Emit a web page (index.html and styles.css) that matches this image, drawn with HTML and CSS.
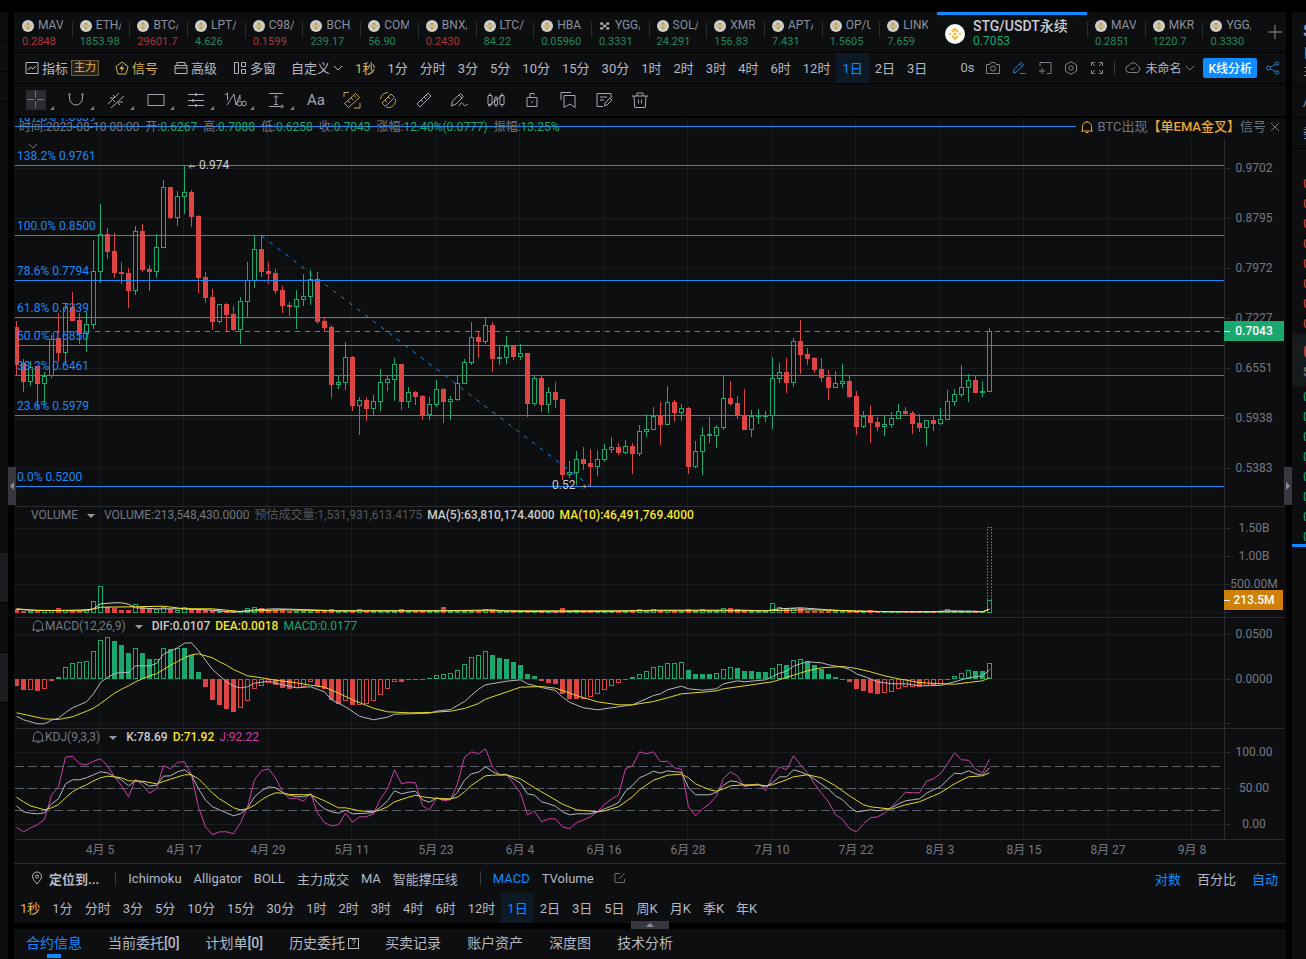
FILE: index.html
```html
<!DOCTYPE html>
<html lang="zh-CN">
<head>
  <meta charset="UTF-8">
  <meta name="viewport" content="width=device-width, initial-scale=1.0">
  <title>STG/USDT永续</title>
  <link rel="stylesheet" href="styles.css">
</head>
<body>
  <svg class="defs" aria-hidden="true">
    <symbol id="coin" viewBox="0 0 20 20">
      <circle cx="10" cy="10" r="10" fill="#fff"/>
      <path fill="#f3ba2f" d="M10 3.6l3.6 3.6-1.5 1.5L10 6.6 7.9 8.7 6.4 7.200zM3.600 10l1.500-1.500L6.600 10l-1.500 1.500zM16.400 10l-1.500-1.500-1.500 1.500 1.500 1.500zM10 8.200l1.800 1.800-1.800 1.800L8.200 10zM10 16.400l3.600-3.600-1.500-1.500-2.100 2.100-2.100-2.100-1.500 1.500z"/>
    </symbol>
    <symbol id="okx" viewBox="0 0 20 20">
      <path fill="#ddd" d="M2 4h5v4H2zM12 4h5v4h-5zM7 8h5v4H7zM2 12h5v4H2zM12 12h5v4h-5z"/>
    </symbol>
    <symbol id="bell" viewBox="0 0 14 14">
      <path d="M1 11h12M2.500 11V6.500a4.500 4.500 0 0 1 9 0V11M5.500 12.500h3M7 2V1"/>
    </symbol>
    <symbol id="down" viewBox="0 0 10 10"><path d="M1 3l4 4 4-4"/></symbol>
  </svg>

  <div class="app">
    <aside class="left">
      <div class="left-top"></div><div></div><div></div><div class="left-fill"></div>
      <div class="slot"></div><div class="left-gap"></div><div class="slot"></div>
    </aside>

    <main class="main">
      <nav class="tabs" id="tabs"></nav>

      <div class="toolbar">
        <button class="tool"><svg viewBox="0 0 14 14"><path d="M1 1.500h12v11H1zM3 9l2.500-3 2.500 2 3-3"/></svg>指标<b class="badge">主力</b></button>
        <button class="tool gold"><svg viewBox="0 0 14 14"><path d="M7 1l6 4.500-2 7.500H3L1 5.500z"/><path class="solid" d="M7.500 3.500L4.500 8h2.200L6 11l3.500-4.500H7z"/></svg>信号</button>
        <button class="tool"><svg viewBox="0 0 14 14"><path d="M1 4.500h12v8H1zM3 4.500v-3h8v3M1 7h12"/></svg>高级</button>
        <button class="tool"><svg viewBox="0 0 14 14"><path d="M1.500 1.500h4v11h-4zM8.500 1.500h4v4h-4zM8.500 8.500h4v4h-4z"/></svg>多窗</button>
        <button class="tool custom">自定义<svg class="chev"><use href="#down"/></svg></button>
        <div class="periods" id="topPeriods"></div>
        <div class="right-tools">
          <span class="secs">0s</span>
          <button aria-label="截图"><svg viewBox="0 0 14 14"><path d="M.5 3.500h3.500l1-2h4l1 2h3.500v9H.5z"/><circle cx="7" cy="7.500" r="2.500"/></svg></button>
          <button class="blue" aria-label="画线"><svg viewBox="0 0 14 14"><path d="M1.500 12l.5-3.500 7-7 2.500 2.500-7 7zM7.500 3l2.500 2.500M8 12.500h5.500"/></svg></button>
          <button aria-label="添加窗口"><svg viewBox="0 0 14 14"><path d="M2 5V1.500h11v11H9M1 10h6M4 7v6"/></svg></button>
          <button aria-label="设置"><svg viewBox="0 0 14 14"><path d="M7 .7l5.500 3.100v6.400L7 13.300l-5.500-3.100V3.800z"/><circle cx="7" cy="7" r="2.200"/></svg></button>
          <button aria-label="全屏"><svg viewBox="0 0 14 14"><path d="M1.500 5V1.500H5M9 1.500h3.500V5M12.500 9v3.500H9M5 12.500H1.500V9M2 2l3 3M12 2L9 5M12 12L9 9M2 12l3-3"/></svg></button>
          <i class="bar"></i>
          <button class="saved"><svg viewBox="0 0 16 14"><path d="M4.500 11.500a3.500 3.500 0 0 1-.5-7 4.500 4.500 0 0 1 8.300 0 3.600 3.600 0 0 1-.3 7zM5.500 7l2 2 3-3"/></svg><span>未命名</span><svg class="chev"><use href="#down"/></svg></button>
          <button class="primary">K线分析</button>
          <button class="blue share" aria-label="分享"><svg viewBox="0 0 14 14"><circle cx="2.500" cy="7" r="2"/><circle cx="11" cy="2.500" r="1.700"/><circle cx="11" cy="11.500" r="1.700"/><path d="M4.500 6l5-2.700M4.500 8l5 2.700"/></svg></button>
        </div>
      </div>

      <div class="draw">
        <button class="wide on" aria-label="十字线"><svg viewBox="0 0 20 20"><path d="M1 9.500h7M11 9.500h7M9.500 1v7M9.500 11v7"/></svg></button>
        <button class="wide" aria-label="曲线"><svg viewBox="0 0 20 20"><path d="M3.500 5v3a6.500 7 0 0 0 13 0V5"/><circle cx="3.500" cy="4.500" r=".8"/><circle cx="16.500" cy="4.500" r=".8"/></svg></button>
        <button class="wide" aria-label="趋势线"><svg viewBox="0 0 20 20"><path d="M2 14L13 3M5 18L18 6M4 8h4M12 12h5M7 5l2 2M12 13l2 2M7 10l2 2"/></svg></button>
        <button class="wide" aria-label="矩形"><svg viewBox="0 0 20 20"><path d="M2 4.500h16v11H2z"/></svg></button>
        <button class="wide" aria-label="通道"><svg viewBox="0 0 20 20"><path d="M2 4.500h16M2 10.500h16M2 15.500h16"/><circle cx="10" cy="4.500" r="1"/><circle cx="7" cy="10.500" r="1"/><circle cx="10" cy="15.500" r="1"/></svg></button>
        <button class="wide" aria-label="波浪"><svg viewBox="0 0 20 20"><path d="M-1 5L1.500 3v7M1 15L8 4l2 11 4-10v5"/><circle cx="13.500" cy="13.500" r="2.300"/><circle cx="18" cy="13.500" r="2.300"/></svg></button>
        <button class="wide" aria-label="测距"><svg viewBox="0 0 20 20"><path d="M3 3.500h14M3 16.500h12M10 6v9M8 7.500L10 5.500l2 2M8 14.500h4"/><circle cx="16" cy="16.500" r="1.200"/></svg></button>
        <button class="aa">Aa</button>
        <button class="gold" aria-label="区间统计"><svg viewBox="0 0 20 20"><path d="M2 7V2.500h5M18 13v5h-6M2.500 13.500l11-10 4 4-11 10zM6 11l2 2M9 8l2 2M12 5.500l2 2"/></svg></button>
        <button class="gold" aria-label="圆形统计"><svg viewBox="0 0 20 20"><path d="M2.500 9A7.500 7.500 0 0 1 10 2.500M17.500 9a7.500 7.500 0 0 1-9 8.500M4 13l9-9 3.500 3.500-9 9zM7 10l2 2M10 7l2 2"/></svg></button>
        <button aria-label="尺子"><svg viewBox="0 0 20 20"><path d="M3 14L14 3l3 3L6 17zM7 10l2 2M10 7l2 2M12 5l1.500 1.500"/></svg></button>
        <button aria-label="画笔"><svg viewBox="0 0 20 20"><path d="M1.500 16l1-5 8-7.500 3 3L6 14zM9 5l3 3M9 16c2-4 3-4 4-2s2 2 5 0"/></svg></button>
        <button aria-label="K线样式"><svg viewBox="0 0 20 20"><path d="M2 5.500h4v9H2zM8.500 8h3v7h-3zM14 5.500h4v9h-4zM4 3v2M4 15v2M10 6v2M10 15v2M16 3v2M16 15v2M2 16L17 5"/></svg></button>
        <button aria-label="锁定"><svg viewBox="0 0 20 20"><path d="M5 7.500h10v9H5zM8 7V3.500h4V5M10 11v2"/></svg></button>
        <button aria-label="收藏"><svg viewBox="0 0 20 20"><path d="M6 5.500h11v12l-5-3.500-6 3.500zM3 10V2.500h10"/></svg></button>
        <button aria-label="笔记"><svg viewBox="0 0 20 20"><path d="M17 8V3.500H3v13h6M6 7h7M6 10h4M10.500 16l.5-3 5-5 2 2-5 5z"/></svg></button>
        <button aria-label="删除"><svg viewBox="0 0 20 20"><path d="M2 6h16M7 6V3h6v3M4 6l.7 11.500h10.600L16 6M8.500 9.500v4M11.500 9.500v4"/></svg></button>
      </div>

      <section class="chart" id="chart">
        <svg class="plot" id="plot" role="img" aria-label="STG/USDT 日线"></svg>
        <div class="pane">
          <p class="legend ohlc">
            <span>时间:2023-08-10 08:00</span><span>开:<em>0.6267</em></span><span>高:<em>0.7088</em></span><span>低:<em>0.6258</em></span><span>收:<em>0.7043</em></span><span>涨幅:<em>12.40%(0.0777)</em></span><span>振幅:<em>13.25%</em></span>
          </p>
          <p class="alert"><svg><use href="#bell"/></svg><span>BTC出现<b>【单EMA金叉】</b>信号</span><button aria-label="关闭"><svg viewBox="0 0 10 10"><path d="M1 1l8 8M9 1L1 9"/></svg></button></p>
        </div>
        <div class="pane">
          <p class="legend"><span class="name">VOLUME</span><i class="caret"></i><span>VOLUME:213,548,430.0000</span><span class="dim">预估成交量:1,531,931,613.4175</span><b>MA(5):63,810,174.4000</b><b class="yellow">MA(10):46,491,769.4000</b></p>
        </div>
        <div class="pane">
          <p class="legend"><span class="name"><svg><use href="#bell"/></svg>MACD(12,26,9)</span><i class="caret"></i><b>DIF:0.0107</b><b class="yellow">DEA:0.0018</b><em>MACD:0.0177</em></p>
        </div>
        <div class="pane">
          <p class="legend"><span class="name"><svg><use href="#bell"/></svg>KDJ(9,3,3)</span><i class="caret"></i><b>K:78.69</b><b class="yellow">D:71.92</b><span class="pink">J:92.22</span></p>
        </div>
      </section>

      <div class="indicators">
        <svg class="pin" viewBox="0 0 12 14"><path d="M6 13C3 9.500 1.500 7.500 1.500 5.500a4.500 4.500 0 0 1 9 0C10.500 7.500 9 9.500 6 13z"/><circle cx="6" cy="5.500" r="1.500"/></svg>
        <button class="locate">定位到...</button>
        <i class="bar"></i>
        <button>Ichimoku</button><button>Alligator</button><button>BOLL</button><button>主力成交</button><button>MA</button><button>智能撑压线</button>
        <i class="bar second"></i>
        <button class="active">MACD</button><button>TVolume</button>
        <button class="edit" aria-label="编辑"><svg viewBox="0 0 12 12"><path d="M6 1.500H1v9h9.500V7M5 7l5.500-5.500"/></svg></button>
        <div class="scale"><button class="active">对数</button><button>百分比</button><button class="active">自动</button></div>
      </div>
      <div class="periods lower" id="lowPeriods"></div>

      <nav class="bottom">
        <a href="#" class="active">合约信息</a><a href="#">当前委托<b>[0]</b></a><a href="#">计划单<b>[0]</b></a><a href="#">历史委托<i class="help">?</i></a><a href="#">买卖记录</a><a href="#">账户资产</a><a href="#">深度图</a><a href="#">技术分析</a>
      </nav>
      <button class="handle h-left" aria-label="展开左侧"></button>
      <button class="handle h-right" aria-label="收起右侧"></button>
      <button class="handle h-bottom" aria-label="展开底部"></button>
    </main>

    <aside class="right">
      <div class="r-head"><b>S</b><span>日</span><span>主</span></div>
      <div class="r-row">/</div>
      <div class="r-row">委</div>
      <div class="book" id="book"></div>
    </aside>
  </div>
  <script src="app.js"></script>
</body>
</html>
```
FILE: styles.css
```css
* {
  box-sizing: border-box;
}
body {
  margin: 0;
  background: #000;
  color: #b4b9c4;
  font-family: Roboto, "Noto Sans CJK SC", sans-serif;
  font-size: 13px;
  overflow-x: hidden;
}
button {
  background: none;
  border: 0;
  padding: 0;
  color: inherit;
  font: inherit;
  white-space: nowrap;
  cursor: pointer;
}
p {
  margin: 0;
}
em, i {
  font-style: normal;
}
svg {
  fill: none;
  stroke: currentColor;
}
.defs {
  position: absolute;
  width: 0;
  height: 0;
}
.app {
  display: grid;
  grid-template-columns: 8px minmax(0, 1fr) 14px;
  gap: 6px;
  padding-top: 12px;
  min-height: 100vh;
}

/* side strips */
.left {
  display: flex;
  flex-direction: column;
  background: #0d0e10;
}
.left div {
  height: 30px;
  border-bottom: 1px solid #000;
}
.left .left-fill {
  height: 451px;
  border: 0;
}
.left .slot {
  height: 50px;
  background: #1c1d21;
}
.left .left-gap {
  height: 50px;
}
.right {
  background: #0d0e10;
  overflow: hidden;
}
.r-head, .r-row {
  padding-left: 11px;
  border-bottom: 1px solid #000;
}
.r-head {
  height: 75px;
  padding-top: 6px;
  color: #7f9ac0;
}
.r-head b {
  display: block;
  font-size: 18px;
  line-height: 26px;
}
.r-head span {
  display: block;
  line-height: 18px;
}
.r-row {
  height: 31px;
  line-height: 30px;
  color: #7f9ac0;
}
.book {
  padding-top: 25px;
  border-bottom: 3px solid #108bff;
}
.book div {
  height: 20px;
  padding-left: 11px;
  line-height: 20px;
}
.book div:last-child {
  height: 17px;
}
.book .sell {
  color: #dd4545;
}
.book .buy {
  color: #1aa86e;
}
.book .last {
  height: 52px;
  padding-top: 8px;
  margin-bottom: 1px;
  background: #181b1c;
  font-size: 18px;
}
.book small {
  display: block;
  color: #888;
  font-size: 12px;
}

.main {
  position: relative;
  min-width: 0;
  display: flex;
  flex-direction: column;
}
.toolbar, .draw, .tabs, .indicators, .lower {
  display: flex;
  align-items: center;
  background: #0d0e10;
}

/* symbol tabs */
.tabs {
  height: 41px;
  border-bottom: 1px solid #000;
}
.tab {
  position: relative;
  flex: 1 1 0;
  min-width: 0;
  height: 40px;
  padding: 2px 0 0 8px;
  text-align: left;
  font-size: 11px;
  line-height: 15px;
  color: #228a5e;
}
.tab.fall {
  color: #ac3838;
}
.tab + .tab:not(.current)::before {
  content: "";
  position: absolute;
  left: 0;
  top: 10px;
  width: 1px;
  height: 16px;
  background: #2c2d31;
}
.tab .pair {
  display: flex;
  align-items: center;
  gap: 4px;
  height: 17px;
  color: #8b909a;
  font-size: 12px;
}
.tab .pair svg {
  flex: none;
  width: 12px;
  height: 12px;
  stroke: none;
  opacity: .8;
}
.tab .pair span {
  width: 25px;
  overflow: hidden;
}
.tab.current {
  flex: 0 0 150px;
  display: flex;
  align-items: center;
  gap: 8px;
  padding: 0 0 0 8px;
  border-top: 3px solid #108bff;
  color: #1aa86e;
  font-size: 12px;
}
.tab.current svg {
  width: 20px;
  height: 20px;
  stroke: none;
}
.tab.current strong {
  display: block;
  color: #c9cdd6;
  font-size: 14px;
  font-weight: 500;
}
.plus {
  flex: 0 0 26px;
  height: 40px;
}
.plus svg {
  width: 14px;
  height: 14px;
  margin: 2px 0 0 4px;
  color: #8b909a;
}

/* main toolbar */
.toolbar {
  height: 31px;
  padding-left: 11px;
  padding-bottom: 1px;
  border-bottom: 1px solid #000;
}
.toolbar svg {
  width: 14px;
  height: 14px;
  flex: none;
}
.toolbar .chev {
  width: 10px;
  height: 10px;
}
.tool {
  display: flex;
  align-items: center;
  gap: 3px;
  margin-right: 16px;
}
.tool.custom {
  margin: 0 6px 0 -1px;
}
.badge {
  height: 16px;
  padding: 0 2px;
  border: 1px solid #6f5a33;
  background: #2b2519;
  color: #e0b252;
  font-size: 11px;
  font-weight: 400;
  line-height: 13px;
}
.gold {
  color: #dcb255;
}
.gold .solid {
  fill: currentColor;
  stroke: none;
}
.periods {
  display: flex;
}
.periods button {
  height: 30px;
  padding: 0 6px 1px;
}
.periods button.sec {
  color: #dcb255;
}
.periods button.on {
  background: #0d1a25;
  color: #108bff;
}
.right-tools {
  display: flex;
  align-items: center;
  gap: 12px;
  margin-left: auto;
  padding-right: 6px;
  color: #7b808b;
}
.right-tools button {
  display: flex;
  align-items: center;
}
.right-tools .blue {
  color: #2a7fd0;
}
.right-tools .share {
  margin-left: -3px;
}
.secs {
  color: #a9aeb9;
}
.bar {
  width: 1px;
  height: 14px;
  background: #3a3b40;
}
.right-tools .bar {
  margin: 0 -2px;
}
.right-tools .saved {
  gap: 4px;
  margin-right: -4px;
  font-size: 12px;
}
.saved svg:first-child {
  width: 16px;
}
.saved span {
  color: #b4b9c4;
}
.right-tools .primary {
  height: 20px;
  padding: 0 5px;
  border-radius: 2px;
  background: #108bff;
  color: #fff;
  font-size: 12px;
  font-weight: 500;
}

/* drawing tools */
.draw {
  height: 34px;
  padding-left: 2px;
  border-bottom: 2px solid #000;
  color: #a2a7b3;
}
.draw button {
  display: flex;
  justify-content: center;
  align-items: center;
  width: 36px;
  height: 32px;
}
.draw .gold {
  color: #c9a44f;
}
.draw svg {
  width: 20px;
  height: 20px;
  overflow: visible;
}
.draw .wide {
  position: relative;
  width: 40px;
}
.draw .wide::after {
  content: "";
  position: absolute;
  right: 2px;
  bottom: 6px;
  border: 2px solid;
  border-color: transparent #777b86 #777b86 transparent;
}
.draw .on svg {
  background: #2b2c31;
  color: #108bff;
}
.draw .aa {
  margin-left: 2px;
  font-size: 15px;
}

/* chart */
.chart {
  position: relative;
  display: grid;
  grid-template-rows: 388px 111px 111px 111px 24px;
  height: 745px;
  background: #0d0e10;
}
.plot {
  position: absolute;
  inset: 0;
  width: 100%;
  height: 100%;
  font-size: 12px;
}
.plot text {
  stroke: none;
  fill: #747884;
}
.plot .fib {
  fill: #1e88f5;
}
.plot .note {
  fill: #ccc;
}
.plot .tag {
  fill: #fff;
  font-weight: 500;
}
.pane {
  position: relative;
  display: flex;
  justify-content: space-between;
  align-items: flex-start;
}
.legend {
  display: flex;
  align-items: center;
  gap: 5px;
  height: 18px;
  padding-left: 17px;
  font-size: 12px;
  line-height: 16px;
  color: #747884;
  white-space: nowrap;
}
.legend.ohlc {
  gap: 6px;
  padding-left: 5px;
}
.legend em {
  color: #1aa86e;
}
.legend b {
  color: #ccc;
  font-weight: 500;
}
.legend .yellow {
  color: #f5e62c;
}
.legend .pink {
  color: #cf3fa6;
}
.legend .dim {
  color: #54575f;
}
.legend .name {
  display: flex;
  align-items: center;
}
.legend .name svg {
  width: 14px;
  height: 14px;
}
.caret {
  margin: 2px 4px 0 4px;
  border: 4px solid transparent;
  border-top-color: #9498a4;
  border-bottom: 0;
}
.alert {
  display: flex;
  align-items: center;
  gap: 4px;
  height: 20px;
  padding: 0 6px 2px 4px;
  background: #0d0e10;
  color: #70747f;
  line-height: 18px;
}
.alert svg {
  width: 14px;
  height: 14px;
  color: #e9a63b;
}
.alert b {
  color: #e9a63b;
  font-weight: 500;
}
.alert button {
  display: flex;
}
.alert button svg {
  width: 10px;
  height: 10px;
  color: #70747f;
}

/* below the chart */
.indicators {
  height: 30px;
  gap: 12px;
  padding: 0 8px 1px 17px;
  border-top: 1px solid #2b2c31;
}
.indicators svg {
  width: 12px;
  height: 14px;
}
.locate {
  margin: 0 4px 0 -6px;
  font-weight: 700;
}
.indicators .second {
  margin-left: 10px;
}
.active {
  color: #108bff;
}
.edit {
  display: flex;
  margin-left: 8px;
  color: #666a74;
}
.scale {
  display: flex;
  gap: 16px;
  margin-left: auto;
}
.bottom {
  flex: 1;
  display: flex;
  gap: 26px;
  min-height: 30px;
  margin-top: 6px;
  padding-left: 12px;
  background: #0d0e10;
  font-size: 14px;
  line-height: 29px;
}
.bottom a {
  position: relative;
  color: #b4b9c4;
  text-decoration: none;
  white-space: nowrap;
}
.bottom a.active {
  color: #108bff;
}
.bottom a.active::after {
  content: "";
  position: absolute;
  left: 50%;
  top: 25px;
  width: 14px;
  height: 4px;
  margin-left: -7px;
  background: #108bff;
}
.bottom b {
  font-weight: 500;
}
.help {
  display: inline-block;
  width: 11px;
  height: 11px;
  margin-left: 3px;
  border: 1px solid;
  font-size: 9px;
  line-height: 9px;
  text-align: center;
  vertical-align: 2px;
}
.handle {
  position: absolute;
  display: flex;
  align-items: center;
  justify-content: center;
  width: 8px;
  height: 38px;
  top: 455px;
  background: #36373f;
}
.handle::after {
  content: "";
  border: 4px solid transparent;
}
.h-left {
  left: -6px;
}
.h-left::after {
  border-right-color: #8a8d99;
  border-left: 0;
}
.h-right {
  right: -6px;
}
.h-right::after {
  border-left-color: #8a8d99;
  border-right: 0;
}
.h-bottom {
  top: 909px;
  left: 50%;
  width: 38px;
  height: 8px;
  margin-left: -19px;
}
.h-bottom::after {
  border-bottom-color: #8a8d99;
  border-top: 0;
}
```
FILE: app.js
```js
// ---- symbol tabs ----
const tabs = [
  ["MAV", "0.2848", 0], ["ETH/", "1853.98", 1], ["BTC/", "29601.7", 0], ["LPT/", "4.626", 1],
  ["C98/", "0.1599", 0], ["BCH/", "239.17", 1], ["COM", "56.90", 1], ["BNX/", "0.2430", 0],
  ["LTC/", "84.22", 1], ["HBA", "0.05960", 1], ["YGG/", "0.3331", 1, "okx"], ["SOL/", "24.291", 1],
  ["XMR", "156.83", 1], ["APT/", "7.431", 1], ["OP/U", "1.5605", 1], ["LINK", "7.659", 1],
  "current",
  ["MAV", "0.2851", 1], ["MKR", "1220.7", 1], ["YGG/", "0.3330", 1]
];
document.getElementById("tabs").innerHTML = tabs.map(t => t === "current"
  ? `<button class="tab current"><svg><use href="#coin"/></svg><span><strong>STG/USDT永续</strong>0.7053</span></button>`
  : `<button class="tab${t[2] ? "" : " fall"}"><span class="pair"><svg><use href="#${t[3] || "coin"}"/></svg><span>${t[0]}</span></span>${t[1]}</button>`
).join("") + `<button class="plus" aria-label="添加"><svg viewBox="0 0 14 14"><path d="M7 0v14M0 7h14"/></svg></button>`;

// ---- period buttons ----
const periods = "1秒 1分 分时 3分 5分 10分 15分 30分 1时 2时 3时 4时 6时 12时 1日 2日 3日".split(" ");
const periodButton = p => `<button class="${p === "1秒" ? "sec" : p === "1日" ? "on" : ""}">${p}</button>`;
document.getElementById("topPeriods").innerHTML = periods.map(periodButton).join("");
document.getElementById("lowPeriods").innerHTML = periods.concat("5日", "周K", "月K", "季K", "年K").map(periodButton).join("");

// ---- order book strip ----
document.getElementById("book").innerHTML =
  '<div class="sell">0</div>'.repeat(8) + '<div class="last sell">0<small>$</small></div>' + '<div class="buy">0</div>'.repeat(8);

// ---- chart data ----
// candles: direction, high, body top, body bottom, low (plot rows)
const candles = `r321,327,365,375 r359,363,382,392 g361,367,382,386 r366,366,384,408 g372,376,384,405 g335,339,376,378 r313,338,353,362
g303,307,353,365 r292,307,321,321 r313,320,334,344 g312,324,334,352 g240,271,325,329 g204,234,272,283 r228,234,252,259 r233,251,273,278
r262,272,274,284 r268,273,291,308 g226,231,291,295 r224,231,270,272 r265,269,272,291 g234,247,272,278 g180,187,248,248 r187,187,218,219
g191,196,218,226 g165,192,197,214 r190,192,217,227 r215,216,278,293 r272,277,298,303 r289,297,322,330 g304,304,322,323 r303,304,315,331
r306,314,330,331 g297,301,330,344 g262,280,302,318 g236,249,281,288 r236,249,272,277 r262,271,274,284 r269,273,291,294 r286,290,306,313
r302,305,307,316 g290,299,307,329 g274,296,300,306 g270,279,297,305 r272,279,322,324 r318,321,328,332 r325,327,385,398 g376,382,385,389
g342,357,383,390 r356,357,406,411 g397,400,406,435 r397,400,409,421 g395,401,409,416 g369,382,402,411 g376,379,383,391 g358,364,380,401
r364,364,402,410 g387,392,402,408 r391,392,397,405 r395,396,415,420 g397,404,415,420 g380,389,405,407 r388,389,402,423 g396,399,402,420
g376,383,400,401 g359,362,384,384 g322,337,363,365 r332,337,342,358 g318,325,342,344 r322,325,359,372 g346,357,359,365 g336,346,358,364
r346,346,357,360 g344,353,357,360 r353,353,404,417 g376,378,404,406 r376,378,405,412 g387,392,405,413 r382,392,400,408 r399,399,475,480
g461,472,475,478 g451,459,473,485 r447,459,464,470 r449,463,467,486 g450,459,467,476 g444,449,460,462 g437,447,450,453 r443,447,453,455
g440,446,453,454 r443,446,454,474 g425,431,454,456 g414,429,432,437 g407,416,430,430 r402,416,425,445 g386,402,425,425 r400,402,413,422
g404,408,413,421 r407,408,467,474 g441,451,467,468 g427,435,452,475 g417,434,436,443 g425,427,436,448 g376,398,428,430 r381,398,404,406
r396,403,416,419 r389,416,430,430 g410,416,430,437 g409,415,417,424 g411,415,417,422 g357,378,416,429 g363,372,379,383 r358,372,383,393
g338,341,383,387 r320,341,355,374 r348,354,359,365 r357,358,370,373 r358,369,378,382 r370,377,388,400 g371,383,388,388 g364,381,384,388
r376,381,397,398 r391,396,427,435 g411,416,427,428 r405,416,423,443 r417,422,427,431 g416,424,427,436 g412,418,425,428 g404,411,419,419
r407,411,414,416 r411,413,424,434 r414,423,428,432 g420,420,428,446 r416,420,424,431 g408,419,424,425 g390,401,420,420 g389,394,402,406
g365,387,395,397 g374,380,388,402 r376,380,393,393 g381,391,393,397 g328,331,392,392`
  .split(/\s+/).map(c => [c[0] === "g", ...c.slice(1).split(",").map(Number)]);

// volume bars taller than the usual two rows
const volume = { 0: 4, 4: 3, 5: 3, 6: 5, 7: 3, 10: 4, 11: 12, 12: 27, 13: 6, 14: 5, 15: 3, 16: 3, 17: 9, 18: 6, 19: 4, 20: 4, 21: 6, 22: 4, 23: 3,
  24: 6, 25: 4, 26: 4, 27: 3, 28: 3, 33: 5, 34: 6, 35: 5, 36: 3, 37: 3, 38: 3, 45: 4, 49: 4, 55: 4, 61: 6, 67: 4, 68: 3, 78: 5, 80: 3, 89: 4,
  91: 4, 93: 3, 96: 4, 98: 4, 101: 5, 102: 5, 103: 4, 104: 3, 108: 10, 109: 6, 110: 4, 111: 5, 112: 5, 122: 3, 133: 4, 139: 13 };

const macd = [-7, -11.2, -11, -12, -10, -2, 1.9, 12, 16, 17, 18, 28, 39, 42, 38, 34, 26, 31, 26, 20, 20.1, 31, 30, 31.2, 31, 24, 7, -8, -21, -26,
  -30, -33, -29, -22, -10, -7, -4, -6, -9, -10, -9, -8, -3, -7, -10, -21, -25, -22, -26, -25.900, -25, -22, -16, -10, -3, -3.100, -1, -.9, -1, 1, 4,
  5, 6, 9, 15, 22, 24, 28, 24, 21, 20, 17, 14, 5, 3, -2, -4, -5, -15, -20, -20.100, -20, -18, -15, -11, -7, -4, -1, 2, 5, 8, 12, 13, 16, 16.100, 17,
  9, 5, 4.900, 4.800, 6, 10, 12, 11, 8, 7.900, 7, 6.900, 11, 15, 14, 19, 20, 18, 14, 10, 5, 2, -1, -3, -10, -12, -14, -15, -14, -13, -10, -8, -7.900,
  -8, -7, -6, -5, -1, 3, 6, 9, 8, 7.900, 16];

// indicator lines: "index:value", values at three steps per row
const lines = [
  ["#d0d0d0", "0:326 2:329 6:330 10:328 11:325 12:310 14:307 15:307 16:311 17:322 20:325 24:325 28:329 31:335 34:328 37:325 42:328 46:331 60:331 66:329 68:328 70:332 77:334 86:332 91:329 104:329 107:331 109:325 112:322 116:328 120:333 131:334 133:331 137:332 138:334 139:326"],
  ["#f5e62c", "0:325 3:330 10:331 12:320 17:319 21:317 24:325 28:325 32:333 38:328 45:331 107:331 113:328 120:331 125:334 138:334 139:326"],
  ["#b5b7bb", "0:647 1:658 3:670 4:670 5:659 6:653 7:636 8:622 10:604 11:580 12:546 13:530 14:520 15:515 16:517 17:496 19:496 20:489 21:461 23:442 24:428 25:427 26:451 28:507 30:544 31:557 32:562 33:559 34:548 36:542 38:553 40:562 42:559 44:574 45:598 47:619 49:647 51:658 53:650 54:641 59:638 60:632 62:627 64:603 66:566 67:553 70:542 72:538 73:550 75:561 77:570 78:590 79:605 81:622 83:628 86:619 88:613 91:585 92:580 93:568 95:557 96:565 98:569 100:565 101:550 103:541 104:544 107:538 109:518 110:512 111:497 112:490 113:484 115:487 116:493 118:500 119:507 120:520 122:535 123:544 125:550 127:550 129:556 132:555 134:544 136:532 138:526 139:508"],
  ["#e2d52e", "0:637 2:646 4:655 6:657 7:653 8:649 10:632 11:623 12:609 14:578 15:566 16:556 17:544 19:526 20:520 22:494 23:483 24:472 25:463 26:460 28:472 29:484 30:494 31:507 33:526 35:532 37:539 40:547 42:554 44:560 46:578 48:598 51:623 53:634 56:637 59:636 62:632 64:624 66:609 67:596 72:560 75:558 77:563 78:570 80:585 83:604 86:613 88:613 91:603 93:592 95:580 98:575 100:571 101:565 104:556 108:544 111:524 113:511 115:502 118:498 120:504 122:514 124:526 126:535 129:546 132:550 134:551 136:546 138:541 139:532"],
  ["#cf3fa6", "0:981 1:994 2:982 3:973 4:956 5:884 6:859 7:770 8:767 9:790 10:793 11:782 12:775 13:796 14:829 15:856 16:889 17:836 18:854 19:878 20:865 21:796 22:805 23:785 24:784 25:823 26:920 27:979 28:1003 29:994 30:994 31:1000 32:967 33:920 34:838 35:811 36:805 37:832 38:874 39:895 40:893 41:902 42:878 43:937 44:967 45:976 46:973 47:938 48:965 49:949 50:949 51:940 52:895 53:865 54:808 55:850 56:845 57:847 58:916 59:929 60:892 61:901 62:898 63:850 64:770 65:754 66:760 67:745 68:799 69:822 70:821 71:850 72:878 73:943 74:932 75:964 76:955 77:955 78:979 79:985 80:967 81:958 82:949 83:934 84:911 85:896 86:883 87:805 88:796 89:754 90:760 91:754 92:784 93:782 94:802 95:806 96:919 97:946 98:925 99:910 100:886 101:833 102:814 103:827 104:859 105:853 106:850 107:871 108:827 109:799 110:808 111:766 112:793 113:817 114:850 115:878 116:904 117:943 118:956 119:985 120:994 121:970 122:952 123:949 124:938 125:919 126:898 127:875 128:877 129:877 130:842 131:835 132:820 133:790 134:757 135:778 136:779 137:805 138:818 139:776"],
  ["#b5b7bb", "0:916 1:934 2:938 3:940 4:937 5:910 6:895 7:850 8:838 9:838 10:832 11:823 12:814 13:817 14:829 15:838 16:856 17:841 18:845 19:857 20:854 21:827 22:826 23:814 24:808 25:823 26:865 27:899 28:919 29:928 30:937 31:946 32:940 33:923 34:889 35:871 36:859 37:862 38:876 39:885 40:888 41:889 42:881 43:907 44:925 45:934 46:938 47:929 48:940 50:938 51:936 52:920 53:901 54:871 55:880 56:875 57:872 58:898 59:905 60:892 61:897 62:896 63:875 64:839 65:820 66:815 67:799 68:813 69:823 70:823 71:835 72:848 73:880 74:884 75:904 76:910 77:917 78:934 79:943 80:940 82:940 83:934 84:925 85:917 86:906 87:872 88:855 89:832 90:823 91:812 92:818 93:811 94:814 95:815 96:862 97:883 99:883 100:875 101:854 102:841 103:844 104:856 106:853 107:859 108:847 109:829 110:829 111:808 112:814 113:823 114:836 115:851 116:866 117:886 118:898 119:919 120:934 121:931 122:928 123:931 124:928 125:922 126:910 127:901 128:898 129:895 130:878 131:868 132:859 133:838 134:818 135:820 136:811 137:820 138:824 139:802"],
  ["#e2d52e", "0:890 1:904 2:916 3:922 4:928 5:922 6:912 7:892 8:874 9:862 10:853 11:841 12:832 13:827 14:829 15:832 16:841 18:842 20:850 22:836 24:823 25:823 26:835 27:856 28:878 29:895 30:908 31:922 32:928 33:925 34:914 35:898 36:886 37:877 38:878 39:882 42:883 44:901 46:922 47:922 49:931 51:934 52:928 53:919 54:904 56:890 57:884 58:889 60:894 62:895 63:890 64:874 65:854 66:840 67:826 68:824 70:823 72:835 74:862 76:886 78:911 80:928 83:934 84:931 86:919 88:889 89:868 91:839 92:832 93:824 95:821 96:832 97:850 98:859 99:868 100:872 101:865 102:856 104:853 106:853 107:856 108:853 110:838 111:829 113:823 115:832 117:856 119:886 121:913 122:919 125:926 127:913 129:904 131:886 132:877 134:850 136:829 138:826 139:817"]
];

const fibs = [[126, "161.8% 1.0539"], [165, "138.2% 0.9761"], [235, "100.0% 0.8500"], [280, "78.6% 0.7794"], [317, "61.8% 0.7239"],
  [345, "50.0% 0.6850"], [375, "38.2% 0.6461"], [415, "23.6% 0.5979"], [486, "0.0% 0.5200"]];
const ticks = [[168, "0.9702"], [218, "0.8795"], [268, "0.7972"], [318, "0.7227"], [368, "0.6551"], [418, "0.5938"], [468, "0.5383"],
  [528, "1.50B"], [556, "1.00B"], [584, "500.00M"], [612, ""], [634, "0.0500"], [679, "0.0000"], [723, ""],
  [752, "100.00"], [788, "50.00"], [824, "0.00"]];
const dates = ["4月 5", "4月 17", "4月 29", "5月 11", "5月 23", "6月 4", "6月 16", "6月 28", "7月 10", "7月 22", "8月 3", "8月 15", "8月 27", "9月 8"];

const UP = "#1aa86e", DOWN = "#dd4545", BG = "#0d0e10";
const LEFT = 14, TOP = 118;

const rect = (x, y, w, h, fill) => `<rect x="${x}" y="${y}" width="${w}" height="${h}" fill="${fill}" stroke="none"/>`;
const bar = (x, y, h, color, hollow) => hollow && h > 2
  ? `<rect x="${x - 1.5}" y="${y + .5}" width="4" height="${h - 1}" fill="${BG}" stroke="${color}"/>`
  : rect(x - 2, y, 5, h, color);
const text = (x, y, s, cls = "", anchor = "start") => `<text x="${x}" y="${y}" class="${cls}" text-anchor="${anchor}">${s}</text>`;
const dash = (y, x2, color, pattern) => `<path d="M15 ${y + .5}H${x2}" stroke="${color}" stroke-dasharray="${pattern}"/>`;

function draw() {
  const svg = document.getElementById("plot");
  const w = svg.parentNode.clientWidth;
  const axis = LEFT + w - 62;
  svg.setAttribute("viewBox", `${LEFT} ${TOP} ${w} 745`);
  let out = '<g shape-rendering="crispEdges">';

  // grid
  dates.forEach((d, i) => { out += rect(99 + 84 * i, TOP, 1, 721, "#1a1c1f"); });
  ticks.forEach(([y]) => { out += rect(15, y, axis - 15, 1, "#1a1c1f") + rect(axis, y, 6, 1, "#2b2c31"); });
  [506, 617, 728, 839].forEach(y => { out += rect(15, y, w - 3, 1, "#2b2c31"); });
  out += rect(axis, TOP, 1, 721, "#2b2c31");
  [766, 788, 810].forEach(y => { out += dash(y, axis - 4, "#5b6068", "9 4"); });
  out += dash(331, axis, UP, "5 5");

  // candles, volume, macd
  candles.forEach(([up, high, top, bottom, low], i) => {
    const x = 16 + 7 * i, color = up ? UP : DOWN;
    out += rect(x, high, 1, low - high, color) + bar(x, top, bottom - top, color, up);
    const v = volume[i] || 2;
    out += bar(x, 613 - v, v, color, up);
    const m = macd[i], h = Math.max(1, Math.round(Math.abs(m)));
    out += bar(x, m > 0 ? 679 - h : 679, h, m > 0 ? UP : DOWN, i > 0 && m > macd[i - 1]);
  });
  out += rect(LEFT, TOP, 1, 721, BG);
  out += `<path d="M987.5 600V527.5H991.5V600" stroke="#666" stroke-dasharray="2 1"/>`;

  fibs.forEach(([y]) => { out += rect(15, y, axis - 15, 1, "#1e88f5"); });
  out += "</g>";
  out += '<path d="M261.500 236L590 486" stroke="#1e88f5" stroke-dasharray="4 6"/>';

  lines.forEach(([color, points]) => {
    const pts = points.split(" ").map(p => p.split(":")).map(([i, v]) => `${16.5 + 7 * i},${(500.5 + v / 3).toFixed(1)}`);
    out += `<polyline points="${pts.join(" ")}" stroke="${color}"/>`;
  });

  // labels
  fibs.forEach(([y, s]) => { out += text(17, y - 5, s, "fib"); });
  ticks.forEach(([y, s]) => { out += text(axis + 30, y + 4, s, "", "middle"); });
  dates.forEach((d, i) => { out += text(100 + 84 * i, 854, d, "", "middle"); });
  out += text(199, 169, "0.974", "note") + '<path d="M195 166.500h-6m2-2l-2 2 2 2" stroke="#aaa"/>';
  out += text(552, 489, "0.52", "note") + '<path d="M582 486.500h4m-2-2l2 2-2 2" stroke="#aaa"/>';
  out += '<path d="M29 144l4 4 4-4" stroke="#747884"/>';
  out += rect(axis, 321, 60, 20, UP) + rect(axis, 331, 6, 1, "#fff") + text(axis + 30, 335, "0.7043", "tag", "middle");
  out += rect(axis, 590, 59, 20, "#cf8008") + rect(axis, 600, 6, 1, "#fff") + text(axis + 30, 604, "213.5M", "tag", "middle");
  svg.innerHTML = out;
}
draw();
window.addEventListener("resize", draw);
```
